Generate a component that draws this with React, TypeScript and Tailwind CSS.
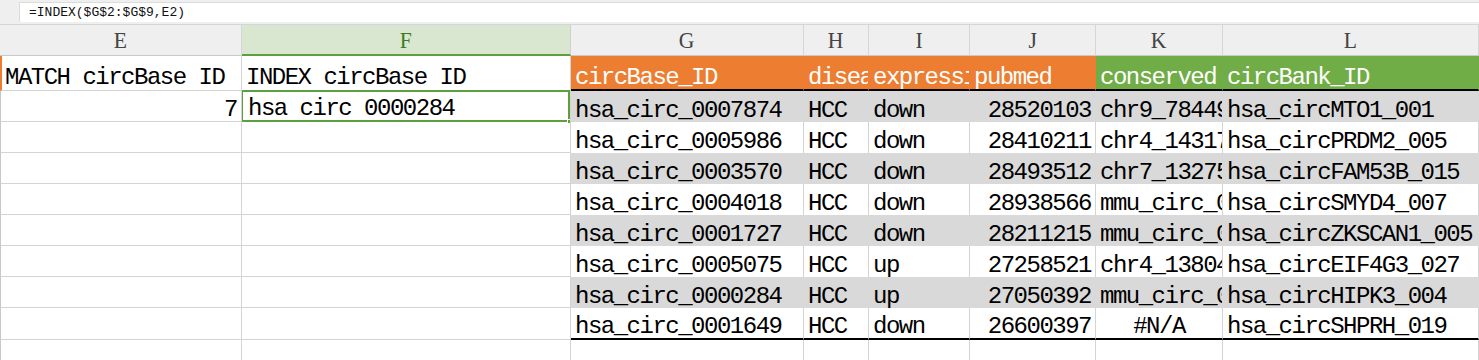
import React from "react";

type Row = {
  id: string;
  disease: string;
  express: string;
  pubmed: string;
  conserved: string;
  bank: string;
};

const rows: Row[] = [
  { id: "hsa_circ_0007874", disease: "HCC", express: "down", pubmed: "28520103", conserved: "chr9_78449371", bank: "hsa_circMTO1_001" },
  { id: "hsa_circ_0005986", disease: "HCC", express: "down", pubmed: "28410211", conserved: "chr4_14317223", bank: "hsa_circPRDM2_005" },
  { id: "hsa_circ_0003570", disease: "HCC", express: "down", pubmed: "28493512", conserved: "chr7_13275906", bank: "hsa_circFAM53B_015" },
  { id: "hsa_circ_0004018", disease: "HCC", express: "down", pubmed: "28938566", conserved: "mmu_circ_0000410", bank: "hsa_circSMYD4_007" },
  { id: "hsa_circ_0001727", disease: "HCC", express: "down", pubmed: "28211215", conserved: "mmu_circ_0000551", bank: "hsa_circZKSCAN1_005" },
  { id: "hsa_circ_0005075", disease: "HCC", express: "up", pubmed: "27258521", conserved: "chr4_13804212", bank: "hsa_circEIF4G3_027" },
  { id: "hsa_circ_0000284", disease: "HCC", express: "up", pubmed: "27050392", conserved: "mmu_circ_0001052", bank: "hsa_circHIPK3_004" },
  { id: "hsa_circ_0001649", disease: "HCC", express: "down", pubmed: "26600397", conserved: "#N/A", bank: "hsa_circSHPRH_019" },
];

const grid = "grid grid-cols-[242px_329px_233px_65px_101px_126px_127px_1fr]";
const txt = "font-['Liberation_Mono',monospace] text-[24px] tracking-[-1.5px] leading-[22px]";
const cell = "flex items-end overflow-x-clip whitespace-nowrap px-[4px] pb-0 border-r";

const letters = ["E", "F", "G", "H", "I", "J", "K", "L"];

export default function App() {
  return (
    <div className="w-[1479px] h-[360px] overflow-hidden bg-white text-black">
      {/* formula bar */}
      <div className="h-[25px] bg-[#efefef] border-b border-[#d6d6d6] pt-[2px]">
        <div className="ml-[19px] h-[20px] bg-white border-l border-t border-[#dcdcdc] pl-[9px] flex items-center font-['Liberation_Mono',monospace] text-[13px] text-[#111]">
          =INDEX($G$2:$G$9,E2)
        </div>
      </div>

      {/* column letters */}
      <div className={`${grid} h-[31px] bg-[#efefef]`}>
        {letters.map((l) =>
          l === "F" ? (
            <div
              key={l}
              className="flex items-end justify-center pb-[2px] bg-[#d9e7d1] border-r border-[#cfcfcf] border-b-2 border-b-[#5c9f3c] font-['Liberation_Serif',serif] text-[24px] leading-[24px] text-[#3d7d1f]"
            >
              <span className="scale-x-90">{l}</span>
            </div>
          ) : (
            <div
              key={l}
              className="flex items-end justify-center pb-[3px] border-r border-[#d6d6d6] border-b border-b-[#c9c9c9] font-['Liberation_Serif',serif] text-[24px] leading-[24px] text-[#444]"
            >
              <span className="scale-x-90">{l}</span>
            </div>
          )
        )}
      </div>

      {/* row 1 headers */}
      <div className={`${grid} h-[35px] ${txt}`}>
        <div className={`${cell} border-[#d4d4d4] border-b border-l-2 border-l-[#ed7d31] pl-[3px] pb-[1px]`}>MATCH circBase ID</div>
        <div className={`${cell} border-[#d4d4d4] border-b pb-[1px]`}>INDEX circBase ID</div>
        <div className={`${cell} bg-[#ed7d31] text-white border-transparent border-b-2 border-b-black`}>circBase_ID</div>
        <div className={`${cell} bg-[#ed7d31] text-white border-transparent border-b-2 border-b-black`}>disease</div>
        <div className={`${cell} bg-[#ed7d31] text-white border-transparent border-b-2 border-b-black`}>expression</div>
        <div className={`${cell} bg-[#ed7d31] text-white border-transparent border-b-2 border-b-black`}>pubmed</div>
        <div className={`${cell} bg-[#70ad47] text-white border-transparent border-b-2 border-b-black`}>conserved</div>
        <div className={`${cell} bg-[#70ad47] text-white border-transparent border-b-2 border-b-black`}>circBank_ID</div>
      </div>

      {/* data rows */}
      {rows.map((r, i) => {
        const gray = i % 2 === 0;
        const last = i === rows.length - 1;
        const data = gray
          ? "bg-[#d9d9d9] border-transparent"
          : "bg-white border-[#d4d4d4]";
        const bottom = last ? "border-b-2 border-b-black" : "";
        return (
          <div key={r.id} className={`${grid} ${last ? "h-[32px]" : "h-[31px]"} ${txt}`}>
            <div className={`${cell} border-[#d4d4d4] border-b border-l border-l-[#c8c8c8] justify-end`}>
              {i === 0 ? "7" : ""}
            </div>
            <div className={`${cell} relative border-[#d4d4d4] border-b`}>
              {i === 0 && (
                <>
                  <span className="pl-[2px] pb-[1px]">hsa circ 0000284</span>
                  <div className="absolute -left-[1px] -top-[1px] right-0 -bottom-[1px] border-2 border-[#5c9f3c]" />
                  <div className="absolute -right-[2px] -bottom-[3px] w-[5px] h-[5px] bg-[#5c9f3c] border border-white" />
                </>
              )}
            </div>
            <div className={`${cell} ${data} ${bottom}`}>{r.id}</div>
            <div className={`${cell} ${data} ${bottom}`}>{r.disease}</div>
            <div className={`${cell} ${data} ${bottom}`}>{r.express}</div>
            <div className={`${cell} ${data} ${bottom} justify-end`}>{r.pubmed}</div>
            <div className={`${cell} ${data} ${bottom} ${r.conserved === "#N/A" ? "justify-center" : ""}`}>
              {r.conserved}
            </div>
            <div className={`${cell} ${data} ${bottom}`}>{r.bank}</div>
          </div>
        );
      })}

      {/* empty row 10 */}
      <div className={`${grid} h-[30px]`}>
        {letters.map((l) => (
          <div key={l} className={`border-r border-[#d4d4d4] ${l === "E" ? "border-l border-l-[#c8c8c8]" : ""}`} />
        ))}
      </div>
    </div>
  );
}
